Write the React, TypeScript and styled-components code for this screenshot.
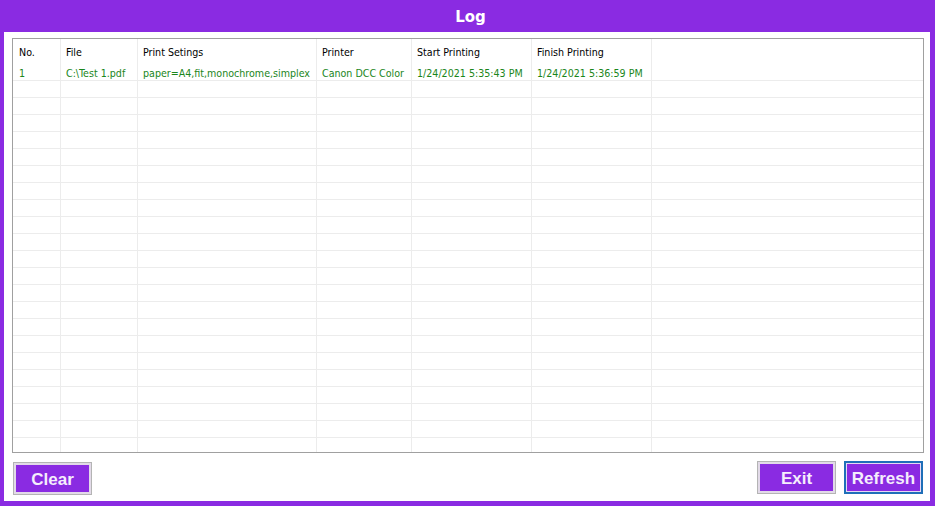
import React from 'react';
import styled, { createGlobalStyle } from 'styled-components';

const GlobalStyle = createGlobalStyle`
  html, body {
    margin: 0;
    padding: 0;
    background: #8a2be2;
  }
  * {
    box-sizing: border-box;
  }
`;

const Window = styled.div`
  width: 935px;
  height: 506px;
  background: #8a2be2;
  display: flex;
  flex-direction: column;
  font-family: 'Liberation Sans', Arial, sans-serif;
`;

const TitleBar = styled.div`
  height: 32px;
  display: flex;
  align-items: center;
  justify-content: center;
  color: #ffffff;
  font-family: 'DejaVu Sans', Verdana, sans-serif;
  font-weight: 700;
  font-size: 15px;
  padding: 2px 0 0 6px;
`;

const Panel = styled.div`
  flex: 1;
  margin: 0 5px 5px 4px;
  background: #ffffff;
  padding: 6px 6px 0 8px;
  display: flex;
  flex-direction: column;
`;

const Grid = styled.div`
  height: 415px;
  border: 1px solid #a0a0a0;
  overflow: hidden;
  display: flex;
  flex-direction: column;
`;

const Row = styled.div<{ $header?: boolean }>`
  display: flex;
  flex-shrink: 0;
  height: ${p => (p.$header ? '25px' : '17px')};
  border-bottom: ${p => (p.$header ? 'none' : '1px solid #ececec')};
`;

const Cell = styled.div<{ $width?: number; $header?: boolean; $first?: boolean }>`
  width: ${p => (p.$width ? `${p.$width}px` : 'auto')};
  flex: ${p => (p.$width ? '0 0 auto' : '1')};
  border-right: ${p => (p.$width ? '1px solid #ececec' : 'none')};
  padding-left: ${p => (p.$first ? '6px' : '5px')};
  padding-top: 2px;
  font-family: 'DejaVu Sans Condensed', 'DejaVu Sans', sans-serif;
  font-size: 10.6px;
  line-height: ${p => (p.$header ? '23px' : '14px')};
  color: ${p => (p.$header ? '#000000' : '#1b861b')};
  white-space: nowrap;
  overflow: hidden;
`;

const ButtonRow = styled.div`
  display: flex;
  align-items: flex-start;
  padding: 8px 1px 0 1px;
  gap: 8px;
`;

const Spacer = styled.div`
  flex: 1;
`;

const Button = styled.button<{ $focused?: boolean; $offset?: number }>`
  width: 79px;
  height: 33px;
  margin-top: ${p => p.$offset || 0}px;
  background: #8a2be2;
  color: #f5eefc;
  font-family: 'Liberation Sans', Arial, sans-serif;
  font-weight: 700;
  font-size: 17px;
  padding: 2px 0 0;
  border: ${p => (p.$focused ? '2px solid #1f6fb8' : '1px solid #b4b4b4')};
  box-shadow: ${p =>
    p.$focused ? 'inset 0 0 0 1px #e6d8f5' : 'inset 0 0 0 2px #e2dae8'};
  cursor: pointer;
`;

const columns = [
  { title: 'No.', width: 48 },
  { title: 'File', width: 77 },
  { title: 'Print Setings', width: 179 },
  { title: 'Printer', width: 95 },
  { title: 'Start Printing', width: 120 },
  { title: 'Finish Printing', width: 120 },
];

const logRows = [
  [
    '1',
    'C:\\Test 1.pdf',
    'paper=A4,fit,monochrome,simplex',
    'Canon DCC Color',
    '1/24/2021 5:35:43 PM',
    '1/24/2021 5:36:59 PM',
  ],
];

const EMPTY_ROWS = 24;

const App: React.FC = () => {
  const rows = [
    ...logRows,
    ...Array.from({ length: EMPTY_ROWS }, () => columns.map(() => '')),
  ];

  return (
    <>
      <GlobalStyle />
      <Window>
        <TitleBar>Log</TitleBar>
        <Panel>
          <Grid>
            <Row $header>
              {columns.map((col, j) => (
                <Cell key={col.title} $width={col.width} $header $first={j === 0}>
                  {col.title}
                </Cell>
              ))}
              <Cell $header />
            </Row>
            {rows.map((row, i) => (
              <Row key={i}>
                {row.map((value, j) => (
                  <Cell key={j} $width={columns[j].width} $first={j === 0}>
                    {value}
                  </Cell>
                ))}
                <Cell />
              </Row>
            ))}
          </Grid>
          <ButtonRow>
            <Button $offset={1}>Clear</Button>
            <Spacer />
            <Button>Exit</Button>
            <Button $focused>Refresh</Button>
          </ButtonRow>
        </Panel>
      </Window>
    </>
  );
};

export default App;
